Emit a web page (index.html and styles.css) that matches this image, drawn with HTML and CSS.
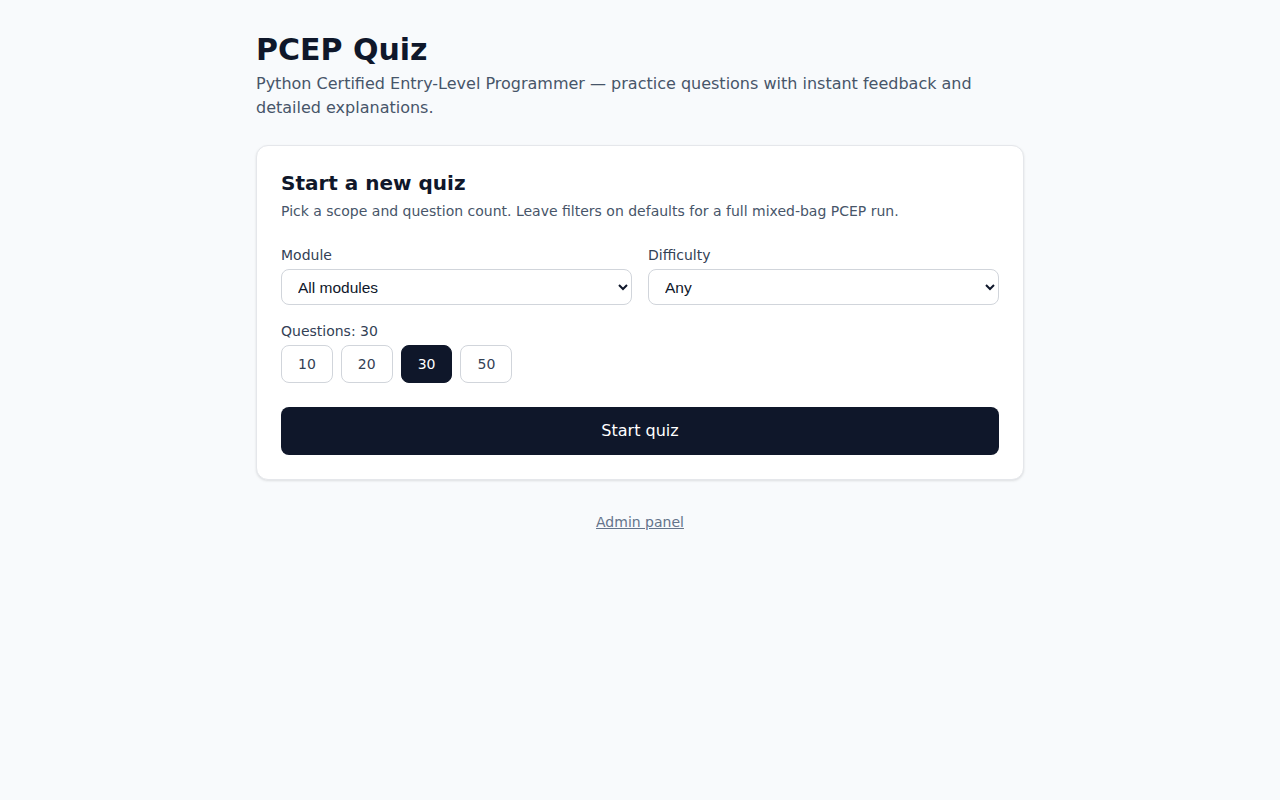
FILE: index.html
```html
<!DOCTYPE html>
<html lang="en">
<head>
<meta charset="utf-8">
<title>PCEP Quiz</title>
<link rel="stylesheet" href="styles.css">
</head>
<body>
<main class="page">
  <header class="header">
    <h1 class="title">PCEP Quiz</h1>
    <p class="subtitle">Python Certified Entry-Level Programmer — practice questions with instant feedback and detailed explanations.</p>
  </header>
  <section class="card">
    <h2 class="card-title">Start a new quiz</h2>
    <p class="card-desc">Pick a scope and question count. Leave filters on defaults for a full mixed-bag PCEP run.</p>
    <div class="grid">
      <label class="field">
        <span class="label">Module</span>
        <select class="select"><option>All modules</option></select>
      </label>
      <label class="field">
        <span class="label">Difficulty</span>
        <select class="select"><option>Any</option></select>
      </label>
    </div>
    <div class="count">
      <span class="label">Questions: 30</span>
      <div class="count-buttons">
        <button class="pill">10</button>
        <button class="pill">20</button>
        <button class="pill active">30</button>
        <button class="pill">50</button>
      </div>
    </div>
    <button class="start">Start quiz</button>
  </section>
  <div class="footer"><a class="admin" href="#">Admin panel</a></div>
</main>
</body>
</html>
```
FILE: styles.css
```css
* { box-sizing: border-box; }
html, body { margin: 0; padding: 0; }
body {
  background: #f8fafc;
  font-family: "DejaVu Sans", sans-serif;
  color: #0f172a;
}
.page {
  max-width: 768px;
  margin: 0 auto;
  padding: 32px 0 32px;
}
.title {
  margin: 0;
  font-size: 30px;
  line-height: 36px;
  font-weight: 700;
  color: #0f172a;
}
.subtitle {
  margin: 4px 0 0;
  font-size: 16px;
  line-height: 24px;
  color: #475569;
}
.card {
  margin-top: 25px;
  background: #fff;
  border: 1px solid #e5e7eb;
  border-radius: 12px;
  box-shadow: 0 1px 3px rgba(0,0,0,0.08), 0 1px 2px rgba(0,0,0,0.04);
  padding: 23px 24px 24px;
}
.card-title {
  margin: 0;
  font-size: 20px;
  line-height: 28px;
  font-weight: 700;
}
.card-desc {
  margin: 4px 0 0;
  font-size: 14px;
  line-height: 20px;
  color: #475569;
}
.grid {
  margin-top: 24px;
  display: grid;
  grid-template-columns: 1fr 1fr;
  gap: 16px;
}
.field { display: flex; flex-direction: column; gap: 4px; }
.label {
  font-size: 14px;
  line-height: 20px;
  color: #334155;
}
.select {
  height: 36px;
  border: 1px solid #d1d5db;
  border-radius: 8px;
  background: #fff;
  padding: 0 12px;
  font-family: "Liberation Sans", Arial, sans-serif;
  font-size: 15.5px;
  color: #0f172a;
}
.count { margin-top: 16px; display: flex; flex-direction: column; gap: 4px; }
.count-buttons { display: flex; gap: 8px; }
.pill {
  height: 38px;
  border: 1px solid #d1d5db;
  border-radius: 8px;
  background: #fff;
  font-family: "DejaVu Sans", sans-serif;
  font-size: 14px;
  line-height: 20px;
  color: #334155;
  padding: 0 16px;
}
.pill.active {
  background: #0f172a;
  border-color: #0f172a;
  color: #fff;
}
.start {
  margin-top: 24px;
  width: 100%;
  height: 48px;
  border: 0;
  border-radius: 8px;
  background: #0f172a;
  color: #fff;
  font-family: "DejaVu Sans", sans-serif;
  font-size: 16px;
  padding: 0 0 2px;
}
.footer { margin-top: 32px; text-align: center; font-size: 14px; line-height: 20px; }
.admin { color: #64748b; text-decoration: underline; }
```
